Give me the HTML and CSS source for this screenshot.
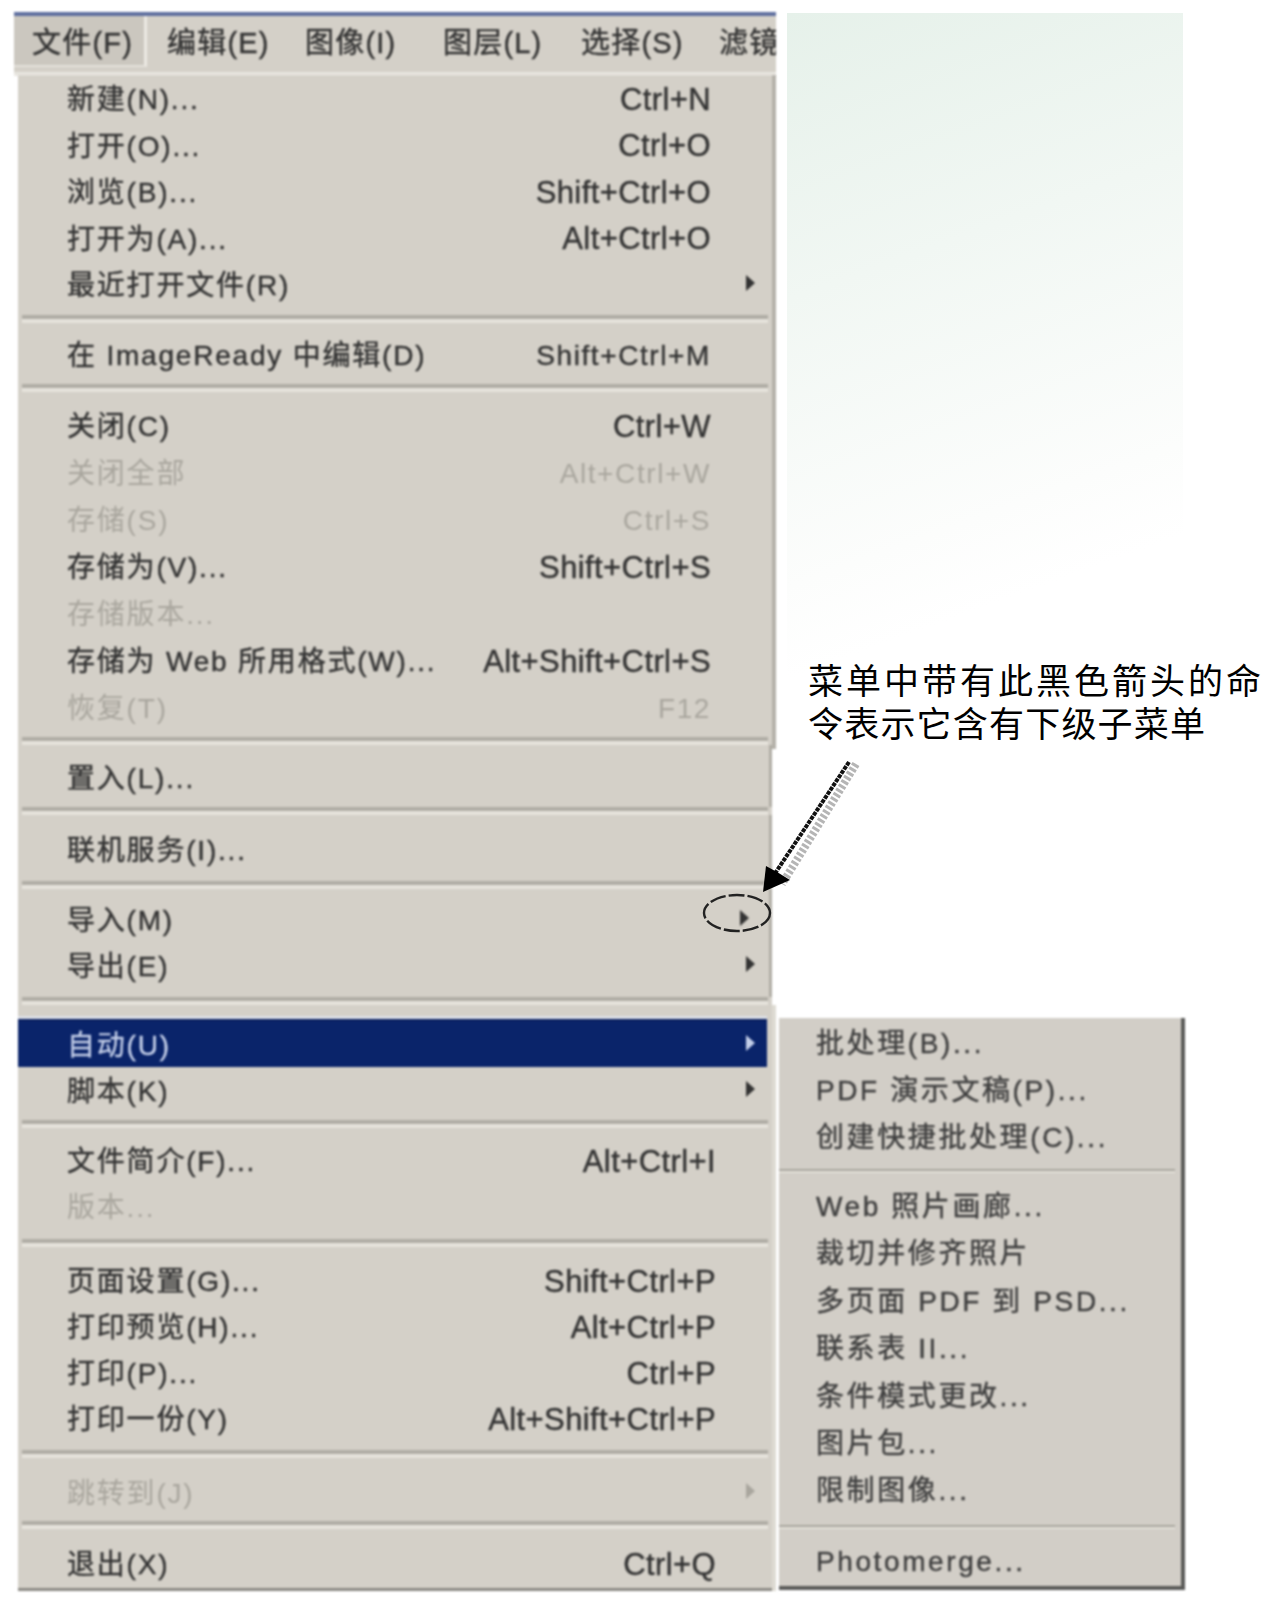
FILE: index.html
```html
<!DOCTYPE html>
<html lang="zh-CN">
<head>
<meta charset="utf-8">
<title>文件菜单</title>
<link rel="stylesheet" href="styles.css">
</head>
<body>
<div class="stage">
  <div class="app">
    <nav class="menubar">
      <span class="tab tab-active">文件(F)</span>
      <span class="tab">编辑(E)</span>
      <span class="tab">图像(I)</span>
      <span class="tab">图层(L)</span>
      <span class="tab">选择(S)</span>
      <span class="tab">滤镜(T)</span>
    </nav>
    <div class="menu">
      <div class="group g1">
        <div class="row"><span>新建(N)...</span><span class="key">Ctrl+N</span></div>
        <div class="row"><span>打开(O)...</span><span class="key">Ctrl+O</span></div>
        <div class="row"><span>浏览(B)...</span><span class="key">Shift+Ctrl+O</span></div>
        <div class="row"><span>打开为(A)...</span><span class="key">Alt+Ctrl+O</span></div>
        <div class="row"><span>最近打开文件(R)</span><i class="caret"></i></div>
      </div>
      <div class="sep"></div>
      <div class="group g2">
        <div class="row"><span>在 ImageReady 中编辑(D)</span><span class="key key-small">Shift+Ctrl+M</span></div>
      </div>
      <div class="sep"></div>
      <div class="group g3">
        <div class="row"><span>关闭(C)</span><span class="key">Ctrl+W</span></div>
        <div class="row off"><span>关闭全部</span><span class="key key-small">Alt+Ctrl+W</span></div>
        <div class="row off"><span>存储(S)</span><span class="key key-small">Ctrl+S</span></div>
        <div class="row"><span>存储为(V)...</span><span class="key">Shift+Ctrl+S</span></div>
        <div class="row off"><span>存储版本...</span></div>
        <div class="row"><span>存储为 Web 所用格式(W)...</span><span class="key">Alt+Shift+Ctrl+S</span></div>
        <div class="row off"><span>恢复(T)</span><span class="key key-small">F12</span></div>
      </div>
      <div class="sep"></div>
      <div class="group g4 edge">
        <div class="row"><span>置入(L)...</span></div>
      </div>
      <div class="sep"></div>
      <div class="group g5 edge">
        <div class="row"><span>联机服务(I)...</span></div>
      </div>
      <div class="sep"></div>
      <div class="group g6 edge">
        <div class="row"><span>导入(M)</span><i class="caret caret-ringed"></i></div>
        <div class="row"><span>导出(E)</span><i class="caret"></i></div>
      </div>
      <div class="sep"></div>
      <div class="group g7">
        <div class="row row-on"><span>自动(U)</span><i class="caret"></i></div>
        <div class="row"><span>脚本(K)</span><i class="caret"></i></div>
      </div>
      <div class="sep"></div>
      <div class="group g8">
        <div class="row row-low"><span>文件简介(F)...</span><span class="key">Alt+Ctrl+I</span></div>
        <div class="row off"><span>版本...</span></div>
      </div>
      <div class="sep"></div>
      <div class="group g9">
        <div class="row row-low"><span>页面设置(G)...</span><span class="key">Shift+Ctrl+P</span></div>
        <div class="row row-low"><span>打印预览(H)...</span><span class="key">Alt+Ctrl+P</span></div>
        <div class="row row-low"><span>打印(P)...</span><span class="key">Ctrl+P</span></div>
        <div class="row row-low"><span>打印一份(Y)</span><span class="key">Alt+Shift+Ctrl+P</span></div>
      </div>
      <div class="sep"></div>
      <div class="group g10">
        <div class="row off"><span>跳转到(J)</span><i class="caret"></i></div>
      </div>
      <div class="sep"></div>
      <div class="group g11">
        <div class="row row-low"><span>退出(X)</span><span class="key">Ctrl+Q</span></div>
      </div>
    </div>
  </div>
  <div class="side">
    <div class="panel">
      <p class="note"><span class="note-line note-wide">菜单中带有此黑色箭头的命</span><span class="note-line">令表示它含有下级子菜单</span></p>
    </div>
    <div class="submenu">
      <div class="sub-group sg1">
        <div class="sub-row">批处理(B)...</div>
        <div class="sub-row">PDF 演示文稿(P)...</div>
        <div class="sub-row">创建快捷批处理(C)...</div>
      </div>
      <div class="sub-sep"></div>
      <div class="sub-group sg2">
        <div class="sub-row">Web 照片画廊...</div>
        <div class="sub-row">裁切并修齐照片</div>
        <div class="sub-row">多页面 PDF 到 PSD...</div>
        <div class="sub-row">联系表 II...</div>
        <div class="sub-row">条件模式更改...</div>
        <div class="sub-row">图片包...</div>
        <div class="sub-row">限制图像...</div>
      </div>
      <div class="sub-sep"></div>
      <div class="sub-group sg3">
        <div class="sub-row">Photomerge...</div>
      </div>
    </div>
  </div>
  <svg class="overlay" width="1281" height="1605" viewBox="0 0 1281 1605" aria-hidden="true">
    <line class="arrow-shade" x1="856" y1="764" x2="782" y2="884"></line>
    <line class="arrow-line" x1="849" y1="762" x2="772" y2="878"></line>
    <path class="arrow-head" d="M763 892 L766 866 L777 872 L790 880 Z"></path>
    <ellipse class="ring" cx="737" cy="913" rx="33" ry="18"></ellipse>
  </svg>
</div>
</body>
</html>
```
FILE: styles.css
```css
* { box-sizing: border-box; }
html, body { margin: 0; padding: 0; background: #fff; }
body { width: 1281px; height: 1605px; overflow: hidden; }

.stage {
  position: relative;
  display: flex;
  align-items: flex-start;
  padding: 12px 0 0 14px;
  font-family: "Liberation Sans", "Noto Sans CJK SC", sans-serif;
  color: #333;
}

/* left: application window with open File menu */
.app { width: 762px; flex: none; }
.menubar {
  display: flex;
  height: 64px;
  overflow: hidden;
  padding-left: 18px;
  background: #d4d0c8;
  border-top: 4px solid #5f6f9f;
  border-bottom: 4px solid #e8e6e0;
  font-size: 29px;
  letter-spacing: 1.2px;
  line-height: 54px;
  white-space: nowrap;
  filter: blur(.9px);
  -webkit-text-stroke: .4px currentColor;
}
.tab { flex: none; width: 138px; }
.tab-active {
  margin: 0 20px 5px -18px;
  padding-left: 18px;
  width: 133px;
  background: #cbc7bf;
  border-right: 3px solid #ece9e3;
  border-bottom: 2px solid #e4e1db;
}
.menu {
  margin-left: 4px;
  background: #d4d0c8;
  border-right: 4px solid #b4b1a9;
  border-image: linear-gradient(#b4b1a9 0 674px, #fff 674px 930px, #dedbd3 930px) 1;
  filter: blur(.9px);
  font-size: 28px;
  letter-spacing: 1.8px;
  white-space: nowrap;
  -webkit-text-stroke: .4px currentColor;
}
.group { display: flex; flex-direction: column; }
.edge { box-shadow: inset -3px 0 0 #b0ada5; }
.g1 { gap: .5px; margin-top: -1px; padding-bottom: 8px; }
.g2 { padding: 8px 0 7px; }
.g3 { gap: 1px; padding: 10px 0 7px; }
.g4 { padding: 9px 0 7px; }
.g5 { padding: 11px 0 9px; }
.g6 { padding: 7px 0 9px; }
.g7 { padding: 14px 0 7px; }
.g8 { padding: 9px 0 10px; }
.g9 { padding: 10px 0 9px; }
.g10 { padding: 11px 0 6px; }
.g11 { padding: 11px 0 2px; border-bottom: 3px solid #8c8a84; }

.row {
  display: flex;
  align-items: center;
  justify-content: space-between;
  height: 46px;
  padding: 0 61px 2px 49px;
}
.row-low { padding-right: 56px; }
.row-on {
  height: 48px;
  margin-right: 5px;
  padding-right: 56px;
  background: #0a246a;
  color: #c3cee8;
  border-top: 2px solid #0a1f5e;
  box-shadow: 0 -3px 0 #dcdfe6;
}
.off { color: #a9a69e; -webkit-text-stroke: 0; }
.key { margin-top: 5px; font-size: 31px; letter-spacing: .4px; }
.key-small { font-size: 28px; letter-spacing: 1.6px; }
.caret {
  width: 0;
  height: 0;
  margin-right: -44px;
  border-left: 9px solid currentColor;
  border-top: 8px solid transparent;
  border-bottom: 8px solid transparent;
}
.caret-ringed { margin-right: -38px; }
.sep {
  height: 8px;
  margin: 0 4px;
  background: linear-gradient(#b0ada5 0 50%, #e6e3dc 50% 100%);
}

/* right: gradient panel, callout and submenu */
.side {
  display: flex;
  flex-direction: column;
  flex: none;
  width: 404px;
  margin: 1px 0 0 11px;
}
.panel {
  position: relative;
  width: 396px;
  height: 1005px;
  background: linear-gradient(160deg, #e6f1ea 0, #f1f7f3 25%, #fcfdfc 50%, #fff 58%);
}
.note {
  position: absolute;
  top: 647px;
  left: 21px;
  margin: 0;
  font-size: 35px;
  line-height: 43px;
  color: #000;
  white-space: nowrap;
}
.note-line { display: block; letter-spacing: 1.2px; }
.note-wide { letter-spacing: 3px; }
.submenu {
  position: relative;
  width: 406px;
  height: 572px;
  margin-left: -8px;
  background: #d2cec7;
  border-right: 4px solid #5a5a58;
  border-bottom: 4px solid #5a5a58;
  color: #3f3f3f;
  font-size: 28px;
  letter-spacing: 2.6px;
  white-space: nowrap;
  filter: blur(1.1px);
  -webkit-text-stroke: .4px currentColor;
}
.sub-group { display: flex; flex-direction: column; }
.sg1 { gap: 1px; padding-bottom: 11px; }
.sg2 { gap: 1.4px; padding: 8px 0 14px; }
.sg3 { padding-top: 10px; }
.sub-row {
  display: flex;
  align-items: center;
  height: 46px;
  padding-left: 37px;
}
.sub-sep {
  height: 4px;
  margin: 0 6px 0 0;
  background: linear-gradient(#a9a69e 0 50%, #e2dfd8 50% 100%);
}

/* annotation drawn over the screenshot */
.overlay { position: absolute; top: 0; left: 0; pointer-events: none; }
.arrow-shade { stroke: #b5b5b5; stroke-width: 8; stroke-dasharray: 3 2; }
.arrow-line { stroke: #111; stroke-width: 4; stroke-dasharray: 4 1; }
.arrow-head { fill: #000; }
.ring { fill: none; stroke: #222; stroke-width: 2.4; stroke-dasharray: 16 3; }
```
